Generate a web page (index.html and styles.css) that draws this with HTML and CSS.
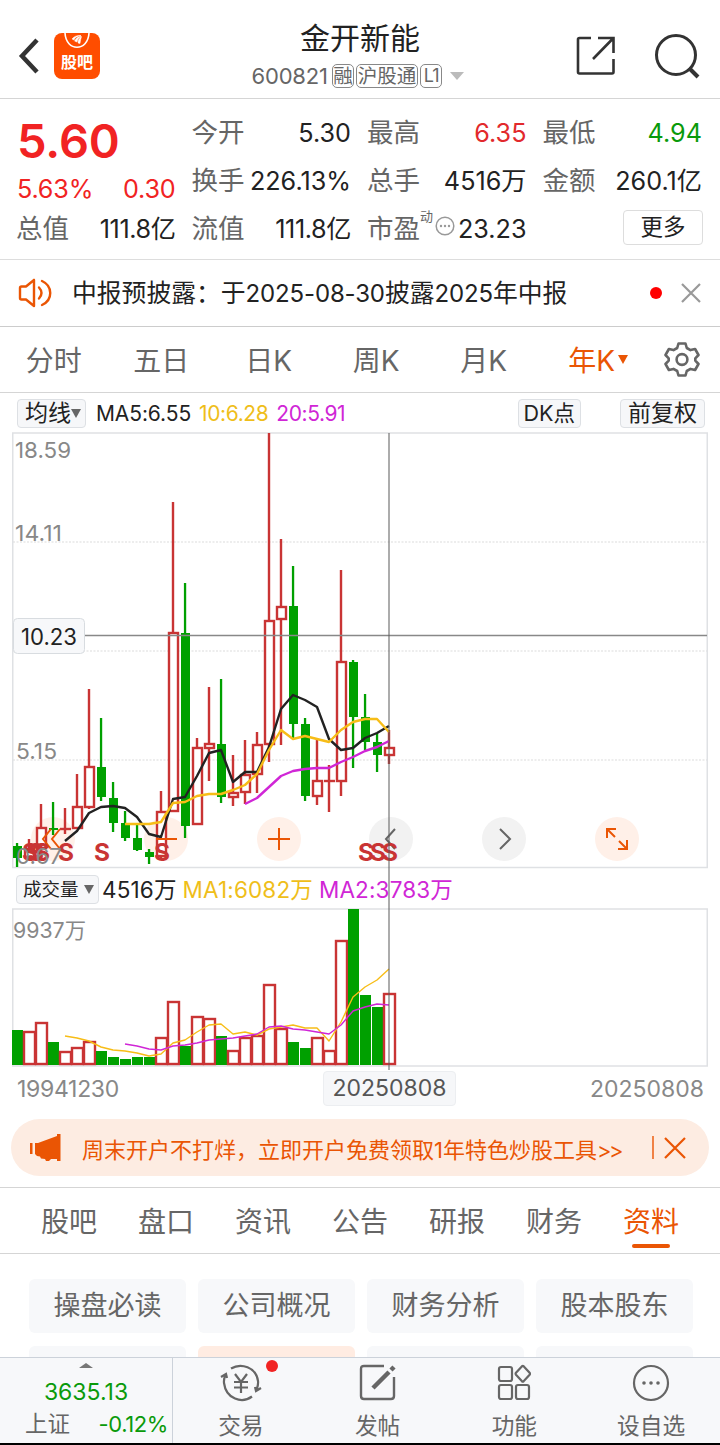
FILE: index.html
```html
<!DOCTYPE html>
<html lang="zh-CN">
<head>
<meta charset="utf-8">
<title>金开新能 600821</title>
<meta name="viewport" content="width=device-width, initial-scale=1">
<link rel="stylesheet" href="styles.css">
</head>
<body>
<div class="app">

<!-- title bar -->
<header class="topbar">
  <div class="topbar-left">
    <svg class="back" width="22" height="36" viewBox="0 0 22 36"><path d="M19 2 4 18l15 16" fill="none" stroke="#333" stroke-width="4.500"/></svg>
    <div class="logo">
      <svg width="46" height="20" viewBox="0 0 46 20" fill="none" stroke="#fff"><path d="M11 0c1 19 23 19 24 0" stroke-width="1.600"/><path d="M18 6q3-4 9-3.500-6 1-7 4.500zM20.500 8q2-4 6.500-5-3 2-4 6zM24 10q0-4 3.500-6.500-1 3-1.500 7z" fill="#fff" stroke-width=".5"/></svg>
      <span>股吧</span>
    </div>
  </div>
  <div class="stock">
    <h1>金开新能</h1>
    <div class="code"><span class="num">600821</span><i>融</i><i>沪股通</i><i class="lv">L1</i><b class="down"></b></div>
  </div>
  <div class="topbar-right">
    <svg width="40" height="40" viewBox="0 0 40 40" fill="none" stroke="#333" stroke-width="2.600"><path d="M15 2H3.500Q2 2 2 3.500V36q0 1.500 1.500 1.500H36q1.500 0 1.500-1.500V23M22 2h15.500v15M37 2.500 17 23"/></svg>
    <svg width="46" height="46" viewBox="0 0 46 46" fill="none" stroke="#333" stroke-width="3"><circle cx="22" cy="22" r="19.500"/><path d="m35 35 9 9" stroke-width="4"/></svg>
  </div>
</header>

<!-- quote -->
<section class="quote">
  <div class="price">
    <strong>5.60</strong>
    <div><span>5.63%</span><span>0.30</span></div>
  </div>
  <div class="cell"><label>今开</label><span>5.30</span></div>
  <div class="cell"><label>最高</label><span class="red">6.35</span></div>
  <div class="cell"><label>最低</label><span class="green">4.94</span></div>
  <div class="cell"><label>换手</label><span>226.13%</span></div>
  <div class="cell"><label>总手</label><span class="cjk">4516万</span></div>
  <div class="cell"><label>金额</label><span class="cjk">260.1亿</span></div>
  <div class="cell"><label>总值</label><span class="cjk ones">111.8亿</span></div>
  <div class="cell"><label>流值</label><span class="cjk ones">111.8亿</span></div>
  <div class="cell"><label>市盈<sup>动</sup></label>
    <svg class="tip" width="20" height="20" viewBox="0 0 20 20"><circle cx="10" cy="10" r="8.800" fill="none" stroke="#999" stroke-width="1.500"/><g fill="#999"><circle cx="6" cy="10" r="1.200"/><circle cx="10" cy="10" r="1.200"/><circle cx="14" cy="10" r="1.200"/></g></svg>
    <span>23.23</span></div>
  <div class="cell end"><button class="more">更多</button></div>
</section>

<!-- notice -->
<section class="notice">
  <svg width="34" height="30" viewBox="0 0 34 30" fill="none" stroke="#ea5504" stroke-width="2.400" stroke-linejoin="round" stroke-linecap="round"><path d="M8 8.500H3.500Q2 8.500 2 10v10q0 1.500 1.500 1.500H8M16 2 8 8.500M8 21.500l8 6.500M16 2v26"/><path d="M21 9.500q5 5.500 0 11M24 3c11 5 11 19 0 24"/></svg>
  <p>中报预披露：于<span>2025-08-30</span>披露<span>2025</span>年中报</p>
  <b class="dot"></b>
  <svg width="20" height="20" viewBox="0 0 20 20"><path d="m1 1 18 18M19 1 1 19" stroke="#999" stroke-width="2.200"/></svg>
</section>

<!-- period tabs -->
<nav class="period">
  <a>分时</a><a>五日</a><a>日K</a><a>周K</a><a>月K</a><a class="on">年K<b></b></a>
  <svg width="36" height="36" viewBox="0 0 36 36" fill="none" stroke="#666" stroke-width="2.600" stroke-linejoin="round"><path d="M14.500 2.500h7l1.300 4.500 3.700 2.100 4.600-1.100 3.400 6-3.200 3.400v2.200l3.200 3.400-3.400 6-4.600-1.100-3.700 2.100-1.300 4.500h-7L13.200 30l-3.700-2.100L4.900 29l-3.400-6 3.200-3.400v-2.200L1.500 14l3.400-6 4.600 1.100L13.200 7z"/><circle cx="18" cy="18.500" r="5.400"/></svg>
</nav>

<!-- chart -->
<section class="chart">
  <div class="legend">
    <span class="pill">均线<b></b></span>
    <span class="ma">MA5:6.55</span><span class="ma yellow">10:6.28</span><span class="ma purple">20:5.91</span>
    <span class="pill dk">DK点</span>
    <span class="pill">前复权</span>
  </div>
  <svg id="kline" width="720" height="437" viewBox="0 432 720 437"></svg>
  <div class="legend vol">
    <span class="pill">成交量<b></b></span>
    <span>4516万</span><span class="yellow">MA1:6082万</span><span class="purple">MA2:3783万</span>
  </div>
  <svg id="volume" width="720" height="159" viewBox="0 908 720 159"></svg>
  <div class="dates"><span class="first">19941230</span><span class="cur">20250808</span><span>20250808</span></div>
  <div class="crosshair"></div>
</section>

<!-- promo -->
<section class="promo">
  <svg width="31" height="27" viewBox="0 0 31 27" fill="#ea5504"><path d="M0 9h2.500v11H0zM5 9h3L27 2V0h3.500v27H27v-2h-6l-2 2h-3l-1-2-4-.500-1-2-3-.500-2-2z"/></svg>
  <p>周末开户不打烊，立即开户免费领取1年特色炒股工具<span>&gt;&gt;</span></p>
  <svg class="x" width="34" height="24" viewBox="0 0 34 24" fill="none" stroke="#ea5504"><path d="M1 0v23" stroke-width="1.400"/><path d="m13 2 20 20M33 2 13 22" stroke-width="2.200"/></svg>
</section>

<!-- info tabs -->
<nav class="info">
  <a>股吧</a><a>盘口</a><a>资讯</a><a>公告</a><a>研报</a><a>财务</a><a class="on">资料</a>
</nav>
<section class="links">
  <a>操盘必读</a><a>公司概况</a><a>财务分析</a><a>股本股东</a>
  <a></a><a class="on"></a><a></a><a></a>
</section>

<!-- bottom bar -->
<footer class="bottom">
  <div class="index">
    <b></b>
    <span class="val">3635.13</span>
    <div><span>上证</span><span class="green">-0.12%</span></div>
  </div>
  <div class="item">
    <svg width="42" height="38" viewBox="0 0 42 38" fill="none" stroke="#666" stroke-width="2.200"><path d="M11 4.500C21-1.500 36 3 38 17c.5 4-.5 6-1.500 9M41 24l-5 3-1-4M32 32.500C22 40 6 35 4 19c-.3-3 .3-6 2-8.500M1 13l5-3 1 4"/><path d="m15 10 6 8 6-8M14 18h14M14 23.500h14M21 18v11"/></svg>
    <span>交易</span><b class="badge"></b>
  </div>
  <div class="item">
    <svg width="38" height="38" viewBox="0 0 38 38" fill="none" stroke="#666" stroke-width="2.400"><path d="M25 2H5Q2 2 2 5v27q0 3 3 3h27q3 0 3-3V13"/><path d="M14 24 30 8M32 6l3-3" stroke-width="4.500"/></svg>
    <span>发帖</span>
  </div>
  <div class="item">
    <svg width="34" height="38" viewBox="0 0 34 38" fill="none" stroke="#666" stroke-width="2.200"><rect x="2" y="3" width="13" height="14" rx="2"/><path d="M25 2.200q.8-.7 1.600 0l6 6.600q.8 1 0 2l-6 6.500q-.8.700-1.600 0l-6-6.500q-.8-1 0-2z"/><rect x="2" y="21" width="13" height="14" rx="2"/><rect x="19" y="21" width="13" height="14" rx="2"/></svg>
    <span>功能</span>
  </div>
  <div class="item">
    <svg width="38" height="38" viewBox="0 0 38 38"><circle cx="19" cy="19" r="17" fill="none" stroke="#666" stroke-width="2.200"/><g fill="#666"><circle cx="12" cy="19" r="1.800"/><circle cx="19" cy="19" r="1.800"/><circle cx="26" cy="19" r="1.800"/></g></svg>
    <span>设自选</span>
  </div>
</footer>

</div>
<script src="chart.js"></script>
</body>
</html>
```
FILE: styles.css
```css
* {
	box-sizing: border-box;
}

body {
	margin: 0;
	background: #fff;
	color: #222;
	font-family: Inter, "Noto Sans CJK SC", sans-serif;
}

h1, p {
	margin: 0;
	font-weight: normal;
}

i {
	font-style: normal;
}

svg {
	display: block;
	flex: none;
}

.app {
	width: 720px;
	height: 1445px;
	overflow: hidden;
	display: flex;
	flex-direction: column;
	white-space: nowrap;
}

.app > * {
	flex: none;
}

.red { color: #e2292c; }
.green { color: #0a9a0a; }
.yellow { color: #efbe1a; }
.purple { color: #d026d6; }

/* title bar */
.topbar {
	height: 99px;
	padding: 14px 20px 0 18px;
	border-bottom: 1px solid #d5d5d5;
	display: grid;
	grid-template-columns: 150px 1fr 124px;
	align-items: center;
}

.topbar-left {
	display: flex;
	align-items: center;
	gap: 14px;
}

.logo {
	width: 46px;
	height: 46px;
	border-radius: 8px;
	background: #ff4d00;
	color: #fff;
	font-size: 16px;
	font-weight: bold;
	line-height: 18px;
	text-align: center;
}

.stock {
	display: flex;
	flex-direction: column;
	align-items: center;
	padding-right: 28px;
}

.stock h1 {
	font-size: 30px;
	line-height: 44px;
	margin-top: -5px;
	margin-left: 4px;
}

.code {
	display: flex;
	align-items: center;
	gap: 2px;
	height: 30px;
	margin-top: 1px;
	color: #666;
	font-size: 22px;
	letter-spacing: -.2px;
}

.code .num {
	margin-right: 2px;
}

.code i {
	height: 24px;
	padding: 0 .5px;
	border: 1.5px solid #888;
	border-radius: 5px;
	font-size: 19.5px;
	line-height: 22px;
	letter-spacing: 0;
}

.code .lv {
	padding: 0 3px;
	font-size: 18px;
	letter-spacing: -1px;
}

.down {
	margin-left: 6px;
	border: 7px solid transparent;
	border-top: 8px solid #bbb;
	border-bottom: 0;
}

.topbar-right {
	display: flex;
	align-items: center;
	justify-content: space-between;
}

/* quote */
.quote {
	height: 161px;
	padding: 8px 16px 0 17px;
	border-bottom: 1px solid #ddd;
	display: grid;
	grid-template-columns: repeat(4, 158.5px);
	grid-template-rows: repeat(3, 48px);
	column-gap: 17px;
	font-size: 25.2px;
}

.price {
	grid-row: span 2;
	color: #f12323;
}

.price strong {
	display: block;
	padding-top: 8px;
	font-size: 47px;
	font-weight: 600;
	line-height: 52px;
	letter-spacing: -.1px;
}

.price div {
	display: flex;
	justify-content: space-between;
	line-height: 44px;
	letter-spacing: -.2px;
}

.cell {
	display: flex;
	align-items: center;
	justify-content: space-between;
}

.cell > span {
	padding-top: 3px;
}

.cell > .cjk {
	padding-top: 0;
}

.cell label {
	color: #666;
	font-size: 26.5px;
	line-height: 40px;
	margin: 1px 0 0 -1px;
}

.cell sup {
	display: inline-block;
	width: 13px;
	font-size: 13px;
	line-height: 0;
	vertical-align: 17px;
}

.cell .ones {
	letter-spacing: -.4px;
}

.tip {
	margin: 0 0 2px;
}

.end {
	justify-content: flex-end;
}

.more {
	width: 80px;
	height: 35px;
	margin: 0 -1px 0 0;
	padding: 0;
	border: 1.5px solid #ddd;
	border-radius: 4px;
	background: #fff;
	color: #222;
	font: inherit;
	font-size: 22.5px;
	line-height: 30px;
}

/* notice */
.notice {
	height: 67px;
	padding: 0 19px 1px 18px;
	border-bottom: 1px solid #ccc;
	display: flex;
	align-items: center;
}

.notice p {
	flex: 1;
	margin: -4px 0 0 20px;
	font-size: 24.8px;
}

.notice p span {
	font-size: 24px;
	letter-spacing: -.15px;
}

.dot {
	width: 12px;
	height: 12px;
	margin-right: 19px;
	border-radius: 50%;
	background: #f00;
}

/* period tabs */
.period {
	height: 66px;
	padding: 0 20px 1px 0;
	border-bottom: 1px solid #d5d5d5;
	display: grid;
	grid-template-columns: repeat(6, 107.5px) 1fr;
	align-items: center;
	justify-items: center;
	color: #666;
	font-size: 28px;
}

.period svg {
	justify-self: end;
}

.period .on {
	display: flex;
	align-items: center;
	margin-right: -14px;
	color: #ea5504;
}

.period b {
	margin-left: 3px;
	border: 5.5px solid transparent;
	border-top: 9px solid #ea5504;
	border-bottom: 0;
}

/* chart */
.chart {
	position: relative;
}

.legend {
	height: 39px;
	padding: 1px 15px 0 17px;
	display: flex;
	align-items: center;
	font-size: 21px;
}

.pill {
	height: 29px;
	padding: 0 7px;
	border: 1px solid #dde0e4;
	border-radius: 4px;
	background: #f6f7f9;
	display: flex;
	align-items: center;
	font-size: 23px;
	line-height: 27px;
}

.pill b {
	border: 5px solid transparent;
	border-top: 9px solid #666;
	border-bottom: 0;
	margin-right: -3px;
}

.ma {
	margin-left: 8px;
	letter-spacing: -.4px;
}

.pill + .ma {
	margin-left: 10px;
	letter-spacing: -.1px;
}

.dk {
	margin-left: auto;
	margin-right: 39px;
	padding: 0 5px;
	font-size: 21.5px;
}

.vol {
	gap: 3px;
	height: 39px;
	font-size: 22.5px;
	letter-spacing: .15px;
	line-height: 30px;
	padding: 2px 0 0 16px;
}

.vol .pill {
	width: 83px;
	padding: 0 6px;
	font-size: 18.5px;
	letter-spacing: 0;
}

.vol .pill b {
	margin-left: 5px;
}

.vol span + span + span {
	margin-left: 3px;
}

.dates {
	height: 43px;
	padding: 0 16px 0 17px;
	display: flex;
	justify-content: space-between;
	align-items: center;
	color: #888;
	font-size: 23px;
	letter-spacing: 0;
}

.dates .first {
	letter-spacing: -.3px;
}

.dates .cur {
	margin-left: 70px;
	height: 35px;
	padding: 0 8px;
	border: 1px solid #eceef1;
	border-radius: 4px;
	background: #f6f7f9;
	color: #555;
	line-height: 33px;
}

.crosshair {
	position: absolute;
	left: 388px;
	top: 40px;
	width: 2px;
	height: 637px;
	background: rgba(90, 90, 90, .5);
}

/* promo */
.promo {
	height: 57px;
	margin: 9px 11px 11px;
	padding: 0 23px 0 19px;
	border-radius: 29px;
	background: #fdece2;
	color: #ea5504;
	display: flex;
	align-items: center;
}

.promo p {
	flex: 1;
	margin: 0 0 0 21px;
	font-size: 22px;
}

.promo p span {
	letter-spacing: -2.5px;
}

/* info tabs */
.info {
	height: 67px;
	padding: 0 41px;
	border-top: 1px solid #d5d5d5;
	border-bottom: 1px solid #d5d5d5;
	display: flex;
	justify-content: space-between;
	color: #666;
	font-size: 28px;
	line-height: 68px;
}

.info a {
	height: 65px;
}

.info .on {
	position: relative;
	color: #ea5504;
}

.info .on::after {
	content: "";
	position: absolute;
	left: 9px;
	bottom: 5px;
	width: 38px;
	height: 4px;
	border-radius: 2px;
	background: #ea5504;
}

.links {
	height: 103px;
	overflow: hidden;
	padding: 25px 27px 0 29px;
	display: grid;
	grid-template-columns: repeat(4, 157px);
	grid-auto-rows: 54px;
	gap: 13px 12px;
}

.links a {
	border-radius: 6px;
	background: #f7f8fa;
	color: #666;
	font-size: 27px;
	line-height: 53px;
	text-align: center;
}

.links .on {
	background: #ffece2;
}

/* bottom bar */
.bottom {
	height: 88px;
	border-top: 1px solid #ccd2da;
	border-bottom: 2px solid #000;
	background: #f7f8fa;
	display: grid;
	grid-template-columns: 173px repeat(4, 1fr);
	color: #666;
}

.index {
	padding: 5px 4px 0 0;
	border-right: 1px solid #ccd2da;
	display: flex;
	flex-direction: column;
	align-items: center;
}

.index b {
	margin-left: 4px;
	border: 7px solid transparent;
	border-bottom: 5px solid #777;
	border-top: 0;
}

.index .val {
	margin: 8px 0 0 4px;
	color: #0a9a0a;
	font-size: 23px;
	line-height: 32px;
}

.index div {
	align-self: stretch;
	padding-left: 25px;
	display: flex;
	align-items: center;
	justify-content: space-between;
	font-size: 22.5px;
	line-height: 32px;
}

.index .green {
	font-size: 22px;
	letter-spacing: -.4px;
}

.item {
	position: relative;
	padding: 6px 1px 0 0;
	display: flex;
	flex-direction: column;
	align-items: center;
	font-size: 22.7px;
	line-height: 34px;
}

.item span {
	margin-top: 6.5px;
}

.badge {
	position: absolute;
	left: 93px;
	top: 2px;
	width: 12px;
	height: 12px;
	border-radius: 50%;
	background: #f12323;
}

/* svg parts */
.frame { fill: none; stroke: #dfe1e4; stroke-width: 1.5; }
.grid { stroke: #e8e8e8; stroke-width: 1.5; stroke-dasharray: 2 1.5; }
.axis { fill: #888; font-size: 22px; }
.up { fill: #fff; stroke: #c93434; stroke-width: 2.4; }
.fall { fill: #00a000; }
.ma5, .ma10, .ma20 { fill: none; stroke: #222; stroke-width: 2.4; stroke-linejoin: round; }
.ma10 { stroke: #f7bd17; }
.ma20 { stroke: #d026d6; }
.ma10.thin, .ma20.thin { stroke-width: 1.4; }
.sell { fill: #c93434; font-size: 24px; font-weight: bold; }
.orange { fill: #fff0e8; }
.gray { fill: #f2f2f2; }
.icon { fill: none; stroke: #ea5504; stroke-width: 2; }
.icon.dark { stroke: #666; }
.level { stroke: #888; stroke-width: 1.5; }
.tag { fill: #f7f8fa; stroke: #d8dce0; }
.tagtext { fill: #222; font-size: 22.5px; }
```
FILE: chart.js
```javascript
// one row per year: direction, high, body top, body bottom, low, volume top
var bars = [
	['g',843,846,858,867,1030], ['r',839,848,858,860,1031], ['r',804,827,849,850,1022],
	['g',802,828,830,835,1042], ['r',808,828,830,834,1051], ['r',774,806,829,829,1047],
	['r',689,766,808,809,1041], ['g',718,767,797,801,1051], ['g',782,798,823,832,1057],
	['g',811,823,838,841,1059], ['g',825,838,850,851,1057], ['g',849,852,857,864,1057],
	['r',791,811,857,858,1037], ['r',502,632,812,812,1001], ['g',583,633,826,838,1046],
	['r',738,747,825,825,1016], ['r',687,743,749,781,1018], ['g',679,744,797,803,1036],
	['r',755,792,798,806,1050], ['r',740,774,793,804,1037], ['r',732,744,775,793,1035],
	['r',433,620,745,762,984],  ['r',539,606,620,745,1028], ['g',566,606,724,738,1042],
	['g',718,724,796,801,1048], ['r',739,780,797,805,1037], ['r',765,780,782,812,1050],
	['r',570,661,782,796,940],  ['g',660,662,717,768,909],  ['g',694,717,742,750,995],
	['g',733,742,755,772,1007], ['r',730,747,756,764,993]
];

var ma5 = [841,831,813,807,806,808,817,834,837,799,797,776,753,750,782,772,772,747,709,695,700,707,739,750,748,738,733,726];
var ma10 = [824,824,824,822,803,802,796,794,794,790,785,774,750,730,739,736,739,742,730,722,719,719,732];
var ma20 = [804,798,787,776,771,769,768,768,762,757,751,747,741];
var vma1 = [1036,1038,1041,1047,1050,1051,1053,1056,1054,1043,1040,1032,1025,1024,1034,1032,1035,1029,1027,1025,1028,1028,1041,1022,997,987,980,969];
var vma2 = [1044,1046,1049,1050,1046,1045,1043,1040,1039,1038,1036,1034,1027,1026,1029,1030,1032,1034,1025,1011,1007,1004,1005];

function cx( i ) {
	return 17 + 12 * i;
}

function rect( x, y, w, h, cls ) {
	return '<rect x="' + x + '" y="' + y + '" width="' + w + '" height="' + h + '" class="' + cls + '"/>';
}

function path( d, cls ) {
	return '<path d="' + d + '" class="' + cls + '"/>';
}

function text( x, y, s, cls, len ) {
	return '<text x="' + x + '" y="' + y + '" class="' + cls + '" textLength="' + len + '" lengthAdjust="spacingAndGlyphs">' + s + '</text>';
}

// averages always end at the last bar
function line( ys, cls ) {
	var first = bars.length - ys.length;
	var pts = ys.map(function( y, i ) { return cx(first + i) + ',' + y; });
	return '<polyline points="' + pts.join(' ') + '" class="' + cls + '"/>';
}

function button( x, cls ) {
	return '<circle cx="' + x + '" cy="839" r="22" class="' + cls + '"/>';
}

function drawKline() {
	var s = path('M13 542H707M13 651H707M13 760H707', 'grid');
	s += rect(12.75, 433, 694.5, 434.5, 'frame');
	s += button(53, 'orange') + button(166, 'orange') + button(279, 'orange');
	s += button(391, 'gray') + button(504, 'gray') + button(617, 'orange');

	bars.forEach(function( b, i ) {
		var x = cx(i), cls = b[0] == 'r' ? 'up' : 'fall';
		if( cls == 'fall' ) {
			s += rect(x - 1.1, b[1], 2.3, b[4] - b[1], cls);
			s += rect(x - 4, b[2], 9, b[3] - b[2], cls);
		} else {
			s += path('M' + x + ' ' + b[1] + 'V' + b[2] + 'M' + x + ' ' + b[3] + 'V' + b[4], cls);
			if( b[3] - b[2] > 2 )
				s += rect(x - 4, b[2] + 1, 9, b[3] - b[2] - 2, cls);
			else
				s += path('M' + (x - 5) + ' ' + (b[2] + 1) + 'h11', cls);
		}
	});
	s += line(ma5, 'ma5') + line(ma10, 'ma10') + line(ma20, 'ma20');

	s += path('M51 829 43 839l8 10M60 829l-8 10 8 10M156 839h21M268 839h22M279 828v22', 'icon');
	s += path('M395 829l-9 10 9 10M500 829l10 10-10 10', 'icon dark');
	s += path('M607 838v-9h9M607 829l8 8M627 840v9h-9M627 849l-8-8', 'icon');

	[29, 35, 41, 65, 101, 161, 365, 377, 389].forEach(function( x ) {
		s += text(x - 7, 861, 'S', 'sell', 16);
	});
	s += text(15, 458, '18.59', 'axis', 56) + text(15, 541, '14.11', 'axis', 47);
	s += text(16, 759, '5.15', 'axis', 41) + text(16, 864, '0.67', 'axis', 46);
	s += path('M85 635.5H707', 'level') + '<rect x="13.500" y="618.500" width="71" height="35" rx="4" class="tag"/>';
	s += text(21, 645, '10.23', 'tagtext', 56);
	document.getElementById('kline').innerHTML = s;
}

function drawVolume() {
	var s = rect(12.75, 909, 694.5, 157, 'frame');
	bars.forEach(function( b, i ) {
		if( b[0] == 'g' )
			s += rect(cx(i) - 5, b[5], 11, 1065 - b[5], 'fall');
		else
			s += rect(cx(i) - 5, b[5] + 1, 11, 1063 - b[5], 'up');
	});
	s += line(vma1, 'ma10 thin') + line(vma2, 'ma20 thin');
	s += text(13, 938, '9937万', 'axis', 73);
	document.getElementById('volume').innerHTML = s;
}

drawKline();
drawVolume();
```
